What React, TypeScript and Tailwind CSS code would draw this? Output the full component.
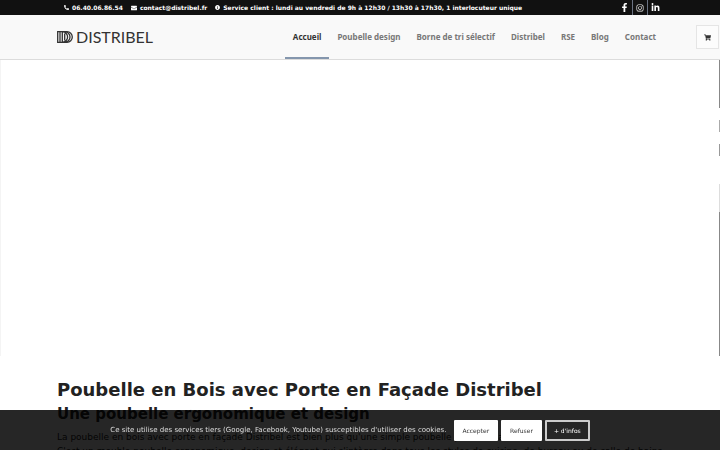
import React from 'react';
import { FaFacebookF, FaInstagram, FaLinkedinIn, FaPhoneAlt, FaEnvelope, FaInfoCircle, FaShoppingCart } from 'react-icons/fa';

const navItems = [
    { label: 'Accueil', active: true },
    { label: 'Poubelle design', active: false },
    { label: 'Borne de tri sélectif', active: false },
    { label: 'Distribel', active: false },
    { label: 'RSE', active: false },
    { label: 'Blog', active: false },
    { label: 'Contact', active: false },
];

const Logo = () => (
    <svg className="h-3 w-4" viewBox="0 0 16 12" fill="none" stroke="#333" strokeWidth="1.3">
        <path d="M.7.7H10a5.3 5.3 0 0 1 0 10.6H.7z" />
        <path d="M3 .7v10.6M5.3.7v10.6" />
        <path d="M5.3.7a5.3 5.3 0 0 1 0 10.6M7.7.7a5.3 5.3 0 0 1 0 10.6M7.7 2.5v7" />
    </svg>
);

const TopBar = () => (
    <div className="bg-[#111] text-white">
        <div className="h-[15px] pl-16 pr-[58px] flex items-center justify-between">
            <ul className="flex items-center gap-2 text-[6px] leading-[14px] font-bold">
                <li className="flex items-center gap-[3px]"><FaPhoneAlt className="size-[5px]" />06.40.06.86.54</li>
                <li className="flex items-center gap-[3px]"><FaEnvelope className="size-[6px]" /><a href="#contact">contact@distribel.fr</a></li>
                <li className="flex items-center gap-[3px]"><FaInfoCircle className="size-[5px]" />Service client : lundi au vendredi de 9h à 12h30 / 13h30 à 17h30, 1 interlocuteur unique</li>
            </ul>
            <ul className="flex h-full divide-x divide-gray-500">
                <li><a href="#facebook" aria-label="Facebook" className="flex h-full w-[15px] items-center justify-center"><FaFacebookF className="size-[9px]" /></a></li>
                <li><a href="#instagram" aria-label="Instagram" className="flex h-full w-[14px] items-center justify-center"><FaInstagram className="size-2" /></a></li>
                <li><a href="#linkedin" aria-label="LinkedIn" className="flex h-full w-[14px] items-center justify-center"><FaLinkedinIn className="size-[9px]" /></a></li>
            </ul>
        </div>
    </div>
);

const Header = () => (
    <header className="flex h-[45px] items-center bg-[#f9f9f9] border-b border-[#dcdcdc] pl-[57px]">
        <a href="#accueil" className="flex items-center gap-[3px] font-['Lato'] text-[16px] text-[#333]">
            <Logo />
            DISTRIBEL
        </a>
        <nav className="ml-auto h-full flex font-['Noto_Sans'] text-[8px] font-bold text-[#777]">
            {navItems.map(item => (
                <a
                    key={item.label}
                    href="#"
                    className={item.active
                        ? 'flex items-center px-2 pt-0.5 text-[#333] border-b-2 border-[#8496ad]'
                        : 'flex items-center px-2 pt-0.5 border-b-2 border-transparent'}
                >
                    {item.label}
                </a>
            ))}
        </nav>
        <button aria-label="Panier" className="ml-8 mr-px h-6 w-[23px] flex items-center justify-center border border-[#e5e5e5] bg-[#fcfcfc] text-[#333]">
            <FaShoppingCart className="size-[7px]" />
        </button>
    </header>
);

const Hero = () => (
    <section aria-label="Diaporama" className="flex h-[296px] justify-end border-l border-[#f4f4f4] bg-white">
        <div className="flex w-px flex-col">
            <span className="h-12 bg-[#888]" />
            <span className="mt-3 h-3 bg-[#aaa]" />
            <span className="mt-3 h-3 bg-[#999]" />
            <span className="mt-7 h-7 bg-[#ddd]" />
            <span className="flex-1 bg-[#888]" />
        </div>
    </section>
);

const CookieBar = () => (
    <div className="fixed inset-x-0 bottom-0 h-10 flex items-center justify-center gap-[3px] bg-black/85 pr-5 text-[6px]">
        <p className="mr-1 text-[7px] text-[#ddd]">Ce site utilise des services tiers (Google, Facebook, Youtube) susceptibles d'utiliser des cookies.</p>
        <button className="h-[21px] rounded-[1px] bg-white px-[9px] text-[#333]">Accepter</button>
        <button className="h-[21px] rounded-[1px] bg-white px-[9px] text-[#333]">Refuser</button>
        <button className="h-[21px] rounded-[1px] border-2 border-[#ccc] px-[7px] text-white">+ d'infos</button>
    </div>
);

export default function App() {
    return (
        <div className="h-screen overflow-hidden bg-white font-['DejaVu_Sans',sans-serif]">
            <TopBar />
            <Header />
            <Hero />
            <main className="px-[57px] pt-6 text-[#222]">
                <h1 className="text-[18px] leading-5 font-bold">Poubelle en Bois avec Porte en Façade Distribel</h1>
                <h2 className="mt-1 text-[15px] leading-5 font-bold">Une poubelle ergonomique et design</h2>
                <p className="mt-1.5 text-[9px] leading-[14px] whitespace-nowrap">
                    La poubelle en bois avec porte en façade Distribel est bien plus qu'une simple poubelle pour bureau.<br />
                    C'est un meuble poubelle ergonomique, design et élégant qui s'intègre dans tous les styles de cuisine, de bureau ou de salle de bains.
                </p>
            </main>
            <CookieBar />
        </div>
    );
}
